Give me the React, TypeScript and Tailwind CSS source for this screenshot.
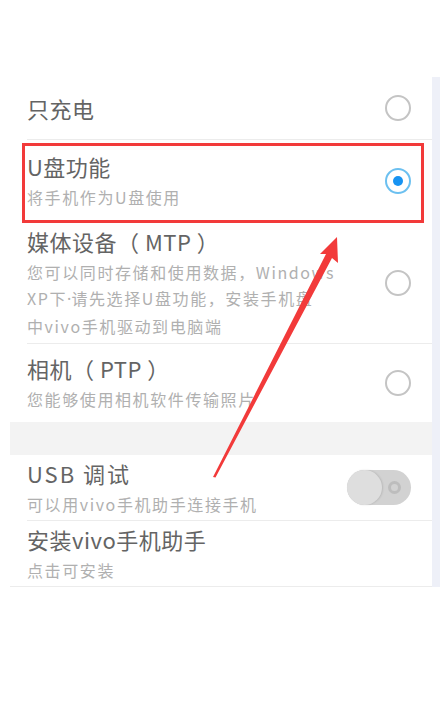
import React from 'react';

const font = { fontFamily: '"Noto Sans CJK SC", "Noto Sans", sans-serif' };

const Radio: React.FC<{ checked?: boolean }> = ({ checked = false }) =>
  checked ? (
    <div className="w-[26px] h-[26px] rounded-full border-2 border-[#6cc0f0] flex items-center justify-center shrink-0">
      <div className="w-[10px] h-[10px] rounded-full bg-[#1793f2]" />
    </div>
  ) : (
    <div className="w-[26px] h-[26px] rounded-full border-2 border-[#c4c4c4] shrink-0" />
  );

const Toggle: React.FC = () => (
  <div className="relative w-[64px] h-[35px] rounded-full bg-[#d2d2d2] shrink-0">
    <div className="absolute left-0 top-0 w-[35px] h-[35px] rounded-full bg-[#dedede] shadow-[1px_0_2px_rgba(0,0,0,0.12)]" />
    <div className="absolute right-[10px] top-[11px] w-[13px] h-[13px] rounded-full border-[3px] border-[#bdbdbd]" />
  </div>
);

interface RowProps {
  title: string;
  desc?: React.ReactNode[];
  right?: React.ReactNode;
  height: string;
  divider?: boolean;
  titleTracking?: string;
}

const Row: React.FC<RowProps> = ({ title, desc, right, height, divider = true, titleTracking = 'tracking-[0.5px]' }) => (
  <div className={`${height} pl-[17px] flex`}>
    <div className={`flex-1 flex items-center pr-[21px] ${divider ? 'border-b border-[#ececec]' : ''}`}>
      <div className="flex-1 flex flex-col">
        <div className={`text-[22px] leading-[30px] text-[#646464] whitespace-pre ${titleTracking}`}>{title}</div>
        {desc && (
          <div className="mt-[3px] flex flex-col">
            {desc.map((d, i) => (
              <div key={i} className="text-[16px] leading-[26.5px] tracking-[1.6px] text-[#b0b0b0] whitespace-nowrap">
                {d}
              </div>
            ))}
          </div>
        )}
      </div>
      {right}
    </div>
  </div>
);

const App: React.FC = () => (
  <div className="relative w-[447px] h-[713px] bg-white overflow-hidden" style={font}>
    <div className="pt-[77px] pl-[10px] flex">
      <div className="w-[422px] flex flex-col">
        <Row title="只充电" height="h-[63px]" right={<Radio />} />
        <Row title="U盘功能" desc={['将手机作为U盘使用']} height="h-[82px]" right={<Radio checked />} divider={false} />
        <Row
          title="媒体设备（ MTP ）"
          desc={[
            '您可以同时存储和使用数据，Windows',
            <>
              XP下<span className="tracking-normal" style={{ fontFamily: '"Noto Sans", sans-serif' }}>·</span>请先选择U盘功能，安装手机盘
            </>,
            '中vivo手机驱动到电脑端',
          ]}
          height="h-[122px]"
          right={<Radio />}
        />
        <Row title="相机（ PTP ）" desc={['您能够使用相机软件传输照片']} height="h-[78px]" right={<Radio />} divider={false} />
        <div className="h-[33px] bg-[#f3f3f3]" />
        <Row title="USB 调试" desc={['可以用vivo手机助手连接手机']} height="h-[66px]" right={<Toggle />} titleTracking="tracking-[2px]" />
        <div className="h-[66px] pl-[17px] flex flex-col justify-center border-b border-[#ececec]">
          <div className="text-[22px] leading-[30px] tracking-[0.5px] text-[#646464]">安装vivo手机助手</div>
          <div className="mt-[3px] text-[16px] leading-[26px] tracking-[1.6px] text-[#b0b0b0]">点击可安装</div>
        </div>
      </div>
      <div className="w-[8px] h-[510px] bg-[#eef0f8]" />
    </div>

    {/* red highlight box */}
    <div className="absolute left-[22px] top-[143px] w-[402px] h-[80px] border-[3px] border-[#f23a3a]" />

    {/* arrow */}
    <svg className="absolute left-0 top-0" width="447" height="713" viewBox="0 0 447 713">
      <polygon points="213,477 215.5,477.5 332,258 338,263 337,237 320,254 326,254" fill="#f23a3a" />
    </svg>
  </div>
);

export default App;
